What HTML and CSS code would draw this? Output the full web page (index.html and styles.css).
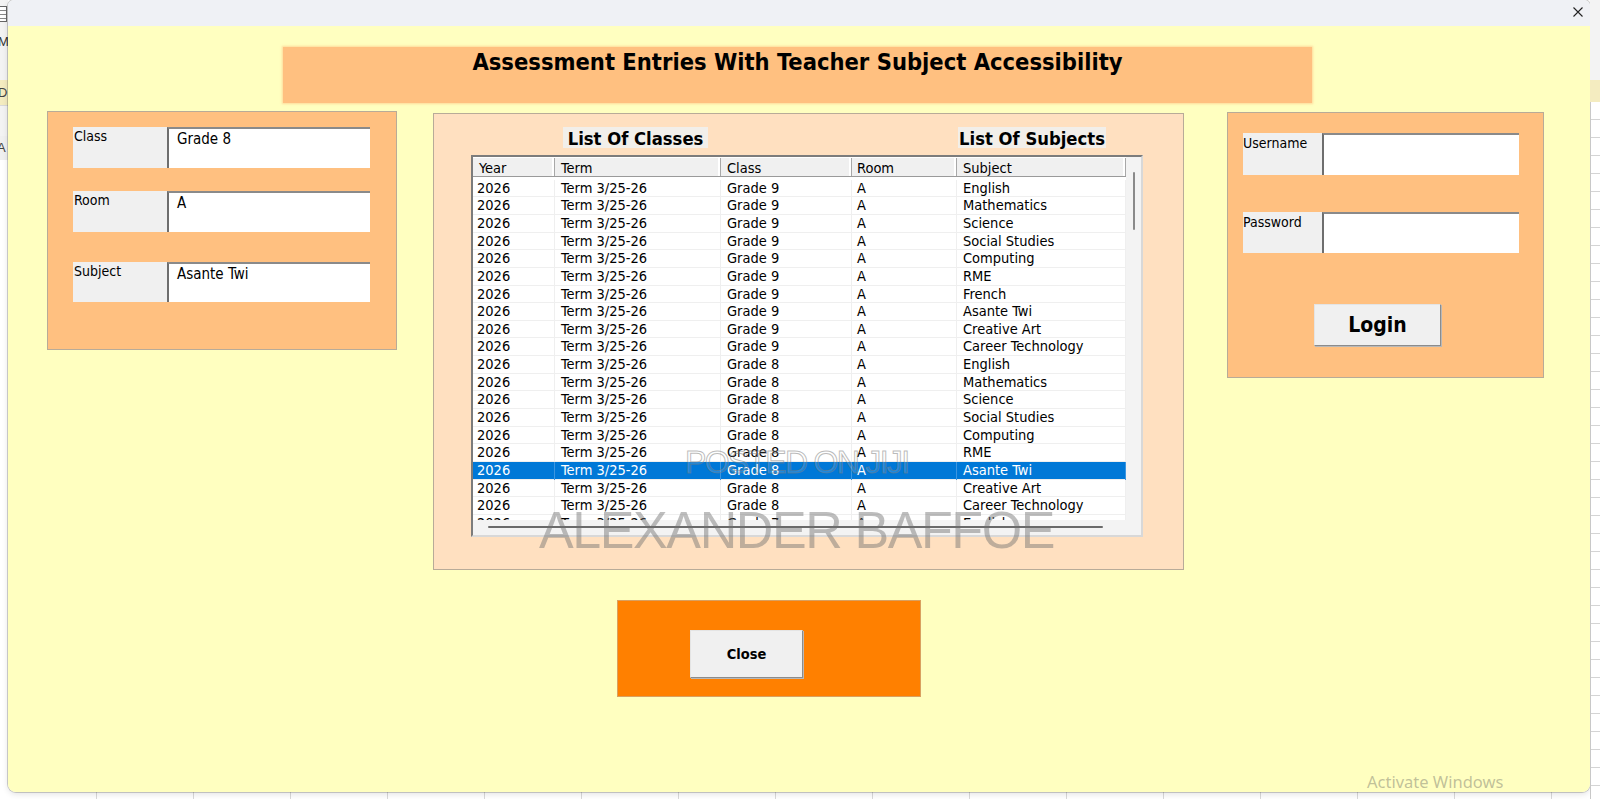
FILE: index.html
```html
<!DOCTYPE html>
<html>
<head>
<meta charset="utf-8">
<title>Assessment Entries</title>
<link rel="stylesheet" href="styles.css">
</head>
<body>
<div class="screen">
  <div class="xl-left">
    <div class="xl-l-top"><span class="xl-icon"></span></div>
    <div class="xl-l-name">Ma</div>
    <div class="xl-l-band">D</div>
    <div class="xl-l-gap"></div>
    <div class="xl-l-cell">A</div>
  </div>
  <div class="window">
    <div class="titlebar">
      <svg class="x-icon" width="10" height="10" viewBox="0 0 10 10"><path d="M0.5 0.5 L9.5 9.5 M9.5 0.5 L0.5 9.5" stroke="#222" stroke-width="1.1" fill="none"/></svg>
    </div>
    <div class="form">
      <div class="banner"><h1 class="banner-title">Assessment Entries With Teacher Subject Accessibility</h1></div>
      <div class="panels">
        <section class="panel info-panel">
          <div class="field field-1"><span class="lbl">Class</span><span class="txt">Grade 8</span></div>
          <div class="field field-2"><span class="lbl">Room</span><span class="txt">A</span></div>
          <div class="field field-3"><span class="lbl">Subject</span><span class="txt">Asante Twi</span></div>
        </section>
        <section class="panel list-panel">
          <div class="list-heads">
            <span class="head head-classes">List Of Classes</span>
            <span class="head head-subjects">List Of Subjects</span>
          </div>
          <div class="listbox">
            <div class="lb-content">
              <div class="lb-header"><span>Year</span><span>Term</span><span>Class</span><span>Room</span><span>Subject</span></div>
              <div class="lb-rows">
                <div class="row"><span>2026</span><span>Term 3/25-26</span><span>Grade 9</span><span>A</span><span>English</span></div>
                <div class="row"><span>2026</span><span>Term 3/25-26</span><span>Grade 9</span><span>A</span><span>Mathematics</span></div>
                <div class="row"><span>2026</span><span>Term 3/25-26</span><span>Grade 9</span><span>A</span><span>Science</span></div>
                <div class="row"><span>2026</span><span>Term 3/25-26</span><span>Grade 9</span><span>A</span><span>Social Studies</span></div>
                <div class="row"><span>2026</span><span>Term 3/25-26</span><span>Grade 9</span><span>A</span><span>Computing</span></div>
                <div class="row"><span>2026</span><span>Term 3/25-26</span><span>Grade 9</span><span>A</span><span>RME</span></div>
                <div class="row"><span>2026</span><span>Term 3/25-26</span><span>Grade 9</span><span>A</span><span>French</span></div>
                <div class="row"><span>2026</span><span>Term 3/25-26</span><span>Grade 9</span><span>A</span><span>Asante Twi</span></div>
                <div class="row"><span>2026</span><span>Term 3/25-26</span><span>Grade 9</span><span>A</span><span>Creative Art</span></div>
                <div class="row"><span>2026</span><span>Term 3/25-26</span><span>Grade 9</span><span>A</span><span>Career Technology</span></div>
                <div class="row"><span>2026</span><span>Term 3/25-26</span><span>Grade 8</span><span>A</span><span>English</span></div>
                <div class="row"><span>2026</span><span>Term 3/25-26</span><span>Grade 8</span><span>A</span><span>Mathematics</span></div>
                <div class="row"><span>2026</span><span>Term 3/25-26</span><span>Grade 8</span><span>A</span><span>Science</span></div>
                <div class="row"><span>2026</span><span>Term 3/25-26</span><span>Grade 8</span><span>A</span><span>Social Studies</span></div>
                <div class="row"><span>2026</span><span>Term 3/25-26</span><span>Grade 8</span><span>A</span><span>Computing</span></div>
                <div class="row"><span>2026</span><span>Term 3/25-26</span><span>Grade 8</span><span>A</span><span>RME</span></div>
                <div class="row selected"><span>2026</span><span>Term 3/25-26</span><span>Grade 8</span><span>A</span><span>Asante Twi</span></div>
                <div class="row"><span>2026</span><span>Term 3/25-26</span><span>Grade 8</span><span>A</span><span>Creative Art</span></div>
                <div class="row"><span>2026</span><span>Term 3/25-26</span><span>Grade 8</span><span>A</span><span>Career Technology</span></div>
                <div class="row"><span>2026</span><span>Term 3/25-26</span><span>Grade 7</span><span>A</span><span>English</span></div>
              </div>
            </div>
            <div class="lb-vscroll"><span class="vthumb"></span></div>
            <div class="lb-hscroll"><span class="hthumb"></span></div>
            <div class="lb-corner"></div>
          </div>
        </section>
        <section class="panel login-panel">
          <div class="field login-1"><span class="lbl">Username</span><span class="txt"></span></div>
          <div class="field login-2"><span class="lbl">Password</span><span class="txt"></span></div>
          <button class="btn login-btn">Login</button>
        </section>
      </div>
      <div class="close-panel"><button class="btn close-btn">Close</button></div>
      <div class="wm wm-posted">POSTED ON JIJI</div>
      <div class="wm wm-name">ALEXANDER BAFFOE</div>
      <div class="activate">Activate Windows</div>
    </div>
  </div>
  <div class="xl-right">
    <div class="xl-r-top"></div>
    <div class="xl-r-band"></div>
    <div class="xl-r-grid"></div>
  </div>
</div>
</body>
</html>
```

FILE: styles.css
```css
html, body {
  margin: 0;
  padding: 0;
}
body {
  width: 1600px;
  height: 799px;
  overflow: hidden;
  font-family: "DejaVu Sans Condensed", "DejaVu Sans", sans-serif;
  font-stretch: condensed;
  color: #000;
}
.screen {
  width: 1600px;
  height: 799px;
  display: flex;
  align-items: flex-start;
  background-color: #ffffff;
  background-image: repeating-linear-gradient(90deg, transparent 0, transparent 96px, #d9d9d9 96px, #d9d9d9 97px);
}

/* Excel behind: left strip */
.xl-left {
  width: 8px;
  height: 799px;
  flex: none;
  display: flex;
  flex-direction: column;
  overflow: hidden;
  background: #ffffff;
  font-family: "Liberation Sans", sans-serif;
  font-size: 13px;
}
.xl-l-top {
  height: 30px;
  background: #f3f3f3;
  display: flex;
  align-items: flex-start;
  padding-top: 6px;
  box-sizing: border-box;
}
.xl-icon {
  width: 6px;
  height: 14px;
  border: 1px solid #666;
  border-left: none;
  background: repeating-linear-gradient(180deg, #fff 0, #fff 3px, #888 3px, #888 4px);
}
.xl-l-name {
  height: 50px;
  background: #f3f3f3;
  line-height: 24px;
  color: #333;
  text-indent: -2px;
}
.xl-l-band {
  height: 25px;
  background: #f4ecc0;
  line-height: 25px;
  color: #444;
  text-indent: -2px;
  border-bottom: 1px solid #d9d9d9;
}
.xl-l-gap {
  height: 30px;
  background: #f3f3f3;
}
.xl-l-cell {
  height: 24px;
  line-height: 24px;
  color: #444;
  text-indent: -3px;
  background: #f0f0f0;
}

/* Excel behind: right strip */
.xl-right {
  width: 10px;
  height: 799px;
  flex: none;
  display: flex;
  flex-direction: column;
}
.xl-r-top {
  height: 80px;
  background: #f3f3f3;
}
.xl-r-band {
  height: 22px;
  background: #f4ecc0;
}
.xl-r-grid {
  flex: 1;
  background-color: #ffffff;
  background-image: repeating-linear-gradient(180deg, #ffffff 0, #ffffff 17px, #d4d4d4 17px, #d4d4d4 18px);
  border-left: 1px solid #c8c8c8;
}

/* Window */
.window {
  width: 1582px;
  height: 792px;
  flex: none;
  display: flex;
  flex-direction: column;
  border-radius: 6px 6px 8px 8px;
  overflow: hidden;
  box-shadow: 0 0 0 1px rgba(0, 0, 0, 0.18), 0 2px 6px rgba(0, 0, 0, 0.12);
}
.titlebar {
  height: 26px;
  flex: none;
  background: #eff1f5;
  display: flex;
  justify-content: flex-end;
  align-items: flex-start;
  padding: 7px 7px 0 0;
  box-sizing: border-box;
}
.x-icon {
  display: block;
}
.form {
  position: relative;
  flex: 1;
  background: #ffffc0;
  overflow: hidden;
}

/* Banner */
.banner {
  width: 1029px;
  height: 56px;
  margin: 21px 0 0 275px;
  background: #ffc080;
  box-shadow: 0 0 2px 1px rgba(255, 192, 128, 0.6);
  padding-top: 1px;
  box-sizing: border-box;
}
.banner-title {
  margin: 0;
  font-size: 23.5px;
  line-height: 28px;
  font-weight: bold;
  text-align: center;
  padding-left: 0;
}

/* Panels row */
.panels {
  display: flex;
  align-items: flex-start;
  margin-top: 8px;
  padding-left: 39px;
}
.panel {
  box-sizing: border-box;
  border: 1px solid #b8ab98;
  display: flex;
  flex-direction: column;
  align-items: flex-start;
}
.info-panel {
  width: 350px;
  height: 239px;
  background: #ffc080;
}
.list-panel {
  width: 751px;
  height: 457px;
  margin: 2px 0 0 36px;
  background: #ffe0c0;
}
.login-panel {
  width: 317px;
  height: 266px;
  margin: 1px 0 0 43px;
  background: #ffc080;
}

/* Label + textbox fields */
.field {
  display: grid;
  grid-template-columns: 94px 203px;
  margin-left: 25px;
}
.field-1 { margin-top: 15px; height: 41px; }
.field-2 { margin-top: 23px; height: 41px; }
.field-3 { margin-top: 30px; height: 40px; }
.login-1, .login-2 {
  grid-template-columns: 79px 197px;
  margin-left: 15px;
}
.login-1 { margin-top: 20px; height: 42px; }
.login-2 { margin-top: 37px; height: 41px; }

.lbl {
  background: #f0f0f0;
  font-size: 14px;
  line-height: 16px;
  padding: 1px 0 0 1px;
}
.login-panel .lbl {
  padding-top: 2px;
  padding-left: 0;
}
.txt {
  background: #ffffff;
  border-top: 2px solid #8a8a8a;
  border-left: 2px solid #6e6e6e;
  font-size: 15px;
  line-height: 18px;
  padding: 1px 0 0 8px;
  box-sizing: border-box;
}

/* Buttons */
.btn {
  font-family: "DejaVu Sans Condensed", "DejaVu Sans", sans-serif;
  font-stretch: condensed;
  font-weight: bold;
  color: #000;
  background: #f0f0f0;
  border: 1px solid #e4e4e4;
  border-right-color: #8c8c8c;
  border-bottom-color: #8c8c8c;
  box-shadow: 1px 1px 0 #b8b8b8;
  padding: 0;
  margin: 0;
  cursor: default;
}
.login-btn {
  width: 127px;
  height: 42px;
  margin: 51px 0 0 86px;
  font-size: 21px;
}

/* List panel */
.list-heads {
  display: flex;
  margin-top: 13px;
  height: 21px;
}
.head {
  font-weight: bold;
  font-size: 18.3px;
  line-height: 20px;
  height: 21px;
  box-sizing: border-box;
  padding-top: 1.5px;
  background: #f2efea;
  text-align: center;
}
.head-classes {
  width: 145px;
  margin-left: 129px;
}
.head-subjects {
  width: 148px;
  margin-left: 250px;
}

.listbox {
  width: 672px;
  height: 382px;
  margin: 7px 0 0 37px;
  box-sizing: border-box;
  border: 2px solid;
  border-color: #7c7c7c #d8d8d8 #d8d8d8 #7c7c7c;
  background: #ffffff;
  display: grid;
  grid-template-columns: 653px 15px;
  grid-template-rows: 363px 15px;
}
.lb-content {
  overflow: hidden;
  padding-top: 1px;
  box-sizing: border-box;
  font-size: 14.5px;
}
.lb-header {
  display: grid;
  grid-template-columns: 82px 166px 131px 105px 169px;
  height: 19px;
  box-sizing: border-box;
  background: #f0f0f0;
  border-bottom: 1px solid #9a9a9a;
  line-height: 16px;
  padding-top: 2px;
}
.lb-header span {
  padding-left: 6px;
  border-right: 1px solid #a8a8a8;
  box-shadow: inset -2px 0 0 #ffffff;
  margin-top: -2px;
  padding-top: 2px;
}
.lb-header span:nth-child(4) {
  padding-left: 5px;
}
.lb-rows {
  margin-top: 2.7px;
}
.row {
  display: grid;
  grid-template-columns: 82px 166px 131px 105px 169px;
  height: 17.65px;
  line-height: 17.65px;
  box-shadow: inset 0 -1px 0 #efefef;
  white-space: nowrap;
}
.row span {
  padding-left: 6px;
  border-right: 1px solid #efefef;
  overflow: hidden;
}
.row span:first-child {
  padding-left: 4px;
}
.row span:nth-child(4) {
  padding-left: 5px;
}
.row.selected {
  background: #0078d7;
  color: #ffffff;
}
.row.selected span {
  border-right-color: #3d96e0;
}

.lb-vscroll {
  background: #f3f3f3;
  display: flex;
  align-items: flex-start;
}
.vthumb {
  width: 2px;
  height: 58px;
  margin: 15px 0 0 7px;
  background: #8a8a8a;
  border-radius: 1px;
}
.lb-hscroll {
  background: #f3f3f3;
  display: flex;
  align-items: flex-start;
}
.hthumb {
  width: 615px;
  height: 2px;
  margin: 6px 0 0 15px;
  background: #6a6a6a;
  border-radius: 1px;
}
.lb-corner {
  background: #f3f3f3;
}

/* Close panel */
.close-panel {
  width: 304px;
  height: 97px;
  margin: 30px 0 0 609px;
  box-sizing: border-box;
  border: 1px solid #d9a060;
  background: #ff8000;
  display: flex;
  align-items: flex-start;
}
.close-btn {
  width: 113px;
  height: 48px;
  margin: 29px 0 0 72px;
  font-size: 14.5px;
}

/* Overlays: watermarks and OS notice */
.wm {
  position: absolute;
  font-family: "Liberation Sans", Arial, sans-serif;
  font-stretch: normal;
  line-height: 1;
  white-space: nowrap;
  pointer-events: none;
}
.wm-posted {
  left: 677px;
  top: 420px;
  font-size: 32px;
  letter-spacing: -1.7px;
  color: rgba(255, 255, 255, 0.15);
  -webkit-text-stroke: 1px rgba(120, 120, 120, 0.5);
}
.wm-name {
  left: 531px;
  top: 478px;
  font-size: 52px;
  letter-spacing: -1.4px;
  color: rgba(110, 110, 110, 0.45);
}
.activate {
  position: absolute;
  left: 1359px;
  top: 747px;
  font-family: "Noto Sans", "Open Sans", sans-serif;
  font-stretch: normal;
  font-size: 16.5px;
  line-height: 17px;
  color: rgba(140, 140, 120, 0.55);
  white-space: nowrap;
}
```
